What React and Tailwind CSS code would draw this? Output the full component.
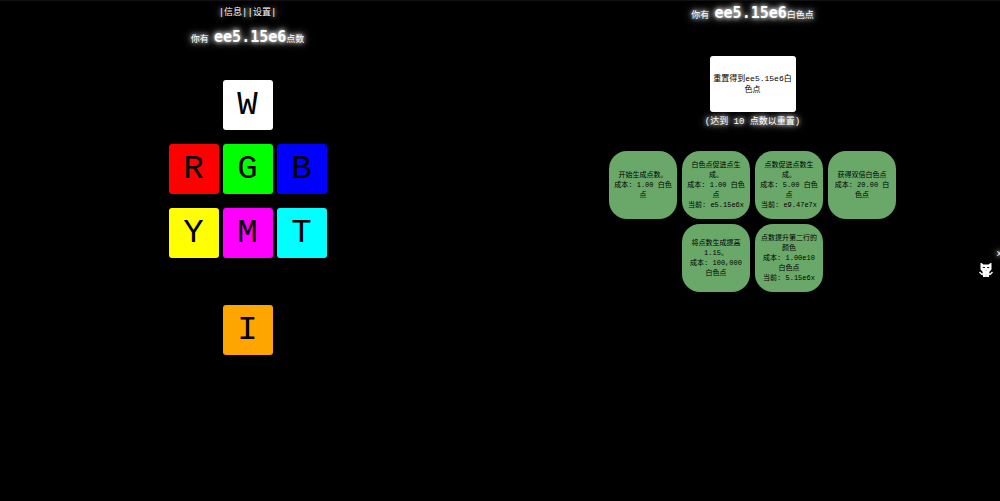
const glow = "[text-shadow:0_0_4px_#fff,0_0_8px_#fff]";

const rows = [
  [["W", "bg-white"]],
  [["R", "bg-[#ff0000]"], ["G", "bg-[#00ff00]"], ["B", "bg-[#0000ff]"]],
  [["Y", "bg-[#ffff00]"], ["M", "bg-[#ff00ff]"], ["T", "bg-[#00ffff]"]],
];

const upgrades = [
  [
    ["开始生成点数。", "成本: 1.00 白色点"],
    ["白色点促进点生成。", "成本: 1.00 白色点", "当前: e5.15e6x"],
    ["点数促进点数生成。", "成本: 5.00 白色点", "当前: e9.47e7x"],
    ["获得双倍白色点", "成本: 20.00 白色点"],
  ],
  [
    ["将点数生成提高1.15。", "成本: 100,000 白色点"],
    ["点数提升第二行的颜色", "成本: 1.00e10 白色点", "当前: 5.15e6x"],
  ],
];

function Node({ label, color }) {
  return (
    <button className={`flex size-[50px] items-center justify-center rounded-[3px] text-[34px] leading-none text-black ${color}`}>
      {label}
    </button>
  );
}

function Amount({ value, unit }) {
  return (
    <h2 className={`text-[9px] leading-5 ${glow}`}>
      你有 <strong className="font-['DejaVu_Sans_Mono',monospace] text-[15px] leading-none font-bold">{value}</strong>
      {unit}
    </h2>
  );
}

function Cat() {
  return (
    <svg viewBox="0 0 14 15" className="h-[15px] w-[14px]" aria-hidden="true">
      <path fill="#fff" d="M1.500 1 2.500 1 4.500 2.500h5L11.500 1h1v6.500L10.500 9.500h-7L1.500 7.500z" />
      <path fill="#fff" d="M3.500 9h7L10 15H4z" />
      <path stroke="#fff" strokeWidth="1.400" fill="none" d="M.5 10l2.200 2.200L4.500 12M13.500 10l-2.200 2.200L9.500 12" />
      <path fill="#222" d="M3.500 5h2.500v1H4zM8 5h2.500L10 6H8z" />
      <path stroke="#aaa" strokeWidth=".5" fill="none" d="m5.700 8 1.300.7L8.300 8M7 12v3" />
    </svg>
  );
}

export default function App() {
  return (
    <div className="relative grid min-h-screen grid-cols-2 overflow-hidden border-t border-[#111] bg-black font-['Liberation_Mono','Noto_Sans_CJK_SC',monospace] text-white">
      <main className="flex flex-col items-center pr-[5px] pt-[6px]">
        <nav className={`flex text-[9px] leading-3 ${glow}`}>
          <span>|</span><button>信息</button><span>|</span><span>|</span><button>设置</button><span>|</span>
        </nav>
        <div className="mt-[11px]"><Amount value="ee5.15e6" unit="点数" /></div>
        <div className="mt-[30px] flex flex-col items-center gap-[14px]">
          {rows.map((row, i) => (
            <div key={i} className="flex gap-1">
              {row.map(([label, color]) => <Node key={label} label={label} color={color} />)}
            </div>
          ))}
        </div>
        <div className="mt-[47px]"><Node label="I" color="bg-[#ffa500]" /></div>
      </main>
      <section className="flex flex-col items-center pl-[5px] pt-[5px]">
        <Amount value="ee5.15e6" unit="白色点" />
        <button className="mt-[30px] h-14 w-[86px] rounded-[3px] bg-white px-[3px] text-[8px] leading-[11px] break-all text-black">
          重置得到ee5.15e6白色点
        </button>
        <p className={`mt-1 text-[9px] leading-3 ${glow}`}>(达到 10 点数以重置)</p>
        <div className="mt-[23px] flex flex-col items-center gap-[5px]">
          {upgrades.map((row, i) => (
            <div key={i} className="flex gap-[5px]">
              {row.map((lines) => (
                <button key={lines[0]} className="flex size-[68px] flex-col items-center justify-center rounded-[18px] bg-[#69a869] px-1 text-center text-[7px] leading-[10px] text-black">
                  {lines.map((line) => <span key={line}>{line}</span>)}
                </button>
              ))}
            </div>
          ))}
        </div>
      </section>
      <div className="absolute top-[261px] right-[7px]"><Cat /></div>
      <span className={`absolute top-[247px] right-[-2px] text-[9px] leading-3 ${glow}`}>x</span>
    </div>
  );
}
